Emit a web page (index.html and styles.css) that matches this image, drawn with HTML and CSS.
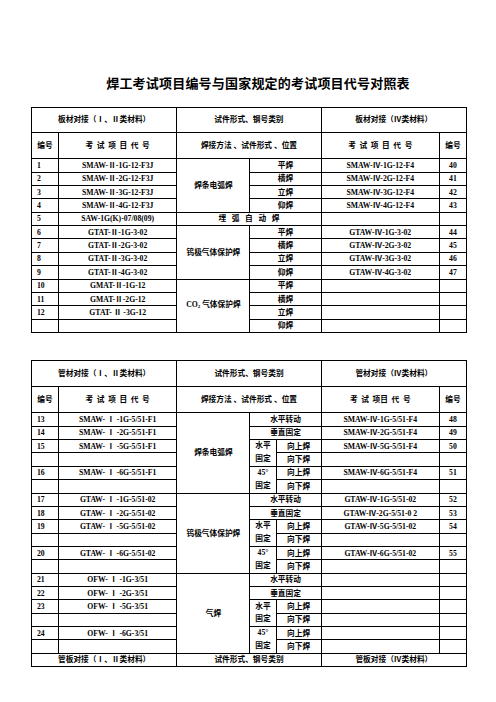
FILE: index.html
```html
<!DOCTYPE html>
<html lang="zh-CN">
<head>
<meta charset="utf-8">
<title>焊工考试项目编号与国家规定的考试项目代号对照表</title>
<link rel="stylesheet" href="styles.css">
</head>
<body>
<div class="page">
  <h1 class="title">焊工考试项目编号与国家规定的考试项目代号对照表</h1>

  <table class="sheet plate">
    <colgroup>
      <col class="c-no"><col class="c-code"><col class="c-method"><col class="c-pos"><col class="c-code"><col class="c-no">
    </colgroup>
    <tr class="h1">
      <td colspan="2">板材对接（Ⅰ、Ⅱ类材料）</td>
      <td colspan="2">试件形式、钢号类别</td>
      <td colspan="2">板材对接（Ⅳ类材料）</td>
    </tr>
    <tr class="h2">
      <td>编号</td>
      <td class="spaced">考 试 项 目 代 号</td>
      <td colspan="2">焊接方法 、试件形式 、位置</td>
      <td class="spaced">考 试 项 目 代 号</td>
      <td>编号</td>
    </tr>
    <tr><td class="num">1</td><td>SMAW-Ⅱ-1G-12-F3J</td><td rowspan="4">焊条电弧焊</td><td>平焊</td><td>SMAW-Ⅳ-1G-12-F4</td><td>40</td></tr>
    <tr><td class="num">2</td><td>SMAW-Ⅱ-2G-12-F3J</td><td>横焊</td><td>SMAW-Ⅳ-2G-12-F4</td><td>41</td></tr>
    <tr><td class="num">3</td><td>SMAW-Ⅱ-3G-12-F3J</td><td>立焊</td><td>SMAW-Ⅳ-3G-12-F4</td><td>42</td></tr>
    <tr><td class="num">4</td><td>SMAW-Ⅱ-4G-12-F3J</td><td>仰焊</td><td>SMAW-Ⅳ-4G-12-F4</td><td>43</td></tr>
    <tr><td class="num">5</td><td>SAW-1G(K)-07/08(09)</td><td colspan="2" class="wide">埋 弧 自 动 焊</td><td></td><td></td></tr>
    <tr><td class="num">6</td><td>GTAT-Ⅱ-1G-3-02</td><td rowspan="4">钨极气体保护焊</td><td>平焊</td><td>GTAW-Ⅳ-1G-3-02</td><td>44</td></tr>
    <tr><td class="num">7</td><td>GTAT-Ⅱ-2G-3-02</td><td>横焊</td><td>GTAW-Ⅳ-2G-3-02</td><td>45</td></tr>
    <tr><td class="num">8</td><td>GTAT-Ⅱ-3G-3-02</td><td>立焊</td><td>GTAW-Ⅳ-3G-3-02</td><td>46</td></tr>
    <tr><td class="num">9</td><td>GTAT-Ⅱ-4G-3-02</td><td>仰焊</td><td>GTAW-Ⅳ-4G-3-02</td><td>47</td></tr>
    <tr><td class="num">10</td><td>GMAT-Ⅱ-1G-12</td><td rowspan="4">CO<span class="sub">2</span> 气体保护焊</td><td>平焊</td><td></td><td></td></tr>
    <tr><td class="num">11</td><td>GMAT-Ⅱ-2G-12</td><td>横焊</td><td></td><td></td></tr>
    <tr><td class="num">12</td><td>GTAT- Ⅱ -3G-12</td><td>立焊</td><td></td><td></td></tr>
    <tr><td class="num"></td><td></td><td>仰焊</td><td></td><td></td></tr>
  </table>

  <table class="sheet pipe">
    <colgroup>
      <col class="c-no"><col class="c-code"><col class="c-method"><col class="c-pos1"><col class="c-pos2"><col class="c-code"><col class="c-no">
    </colgroup>
    <tr class="h1b">
      <td colspan="2">管材对接（Ⅰ、Ⅱ类材料）</td>
      <td colspan="3">试件形式、钢号类别</td>
      <td colspan="2">管材对接（Ⅳ类材料）</td>
    </tr>
    <tr class="h2">
      <td>编号</td>
      <td class="spaced">考 试 项 目 代 号</td>
      <td colspan="3">焊接方法 、试件形式 、位置</td>
      <td class="spaced">考 试 项目 代 号</td>
      <td>编号</td>
    </tr>

    <tr><td class="num">13</td><td>SMAW- Ⅰ -1G-5/51-F1</td><td rowspan="6">焊条电弧焊</td><td colspan="2">水平转动</td><td>SMAW-Ⅳ-1G-5/51-F4</td><td>48</td></tr>
    <tr><td class="num">14</td><td>SMAW- Ⅰ -2G-5/51-F1</td><td colspan="2">垂直固定</td><td>SMAW-Ⅳ-2G-5/51-F4</td><td>49</td></tr>
    <tr><td class="num">15</td><td>SMAW- Ⅰ -5G-5/51-F1</td><td rowspan="2" class="two">水平<br>固定</td><td>向上焊</td><td>SMAW-Ⅳ-5G-5/51-F4</td><td>50</td></tr>
    <tr><td class="num"></td><td></td><td>向下焊</td><td></td><td></td></tr>
    <tr><td class="num">16</td><td>SMAW- Ⅰ -6G-5/51-F1</td><td rowspan="2" class="two">45°<br>固定</td><td>向上焊</td><td>SMAW-Ⅳ-6G-5/51-F4</td><td>51</td></tr>
    <tr><td class="num"></td><td></td><td>向下焊</td><td></td><td></td></tr>

    <tr><td class="num">17</td><td>GTAW- Ⅰ -1G-5/51-02</td><td rowspan="6">钨极气体保护焊</td><td colspan="2">水平转动</td><td>GTAW-Ⅳ-1G-5/51-02</td><td>52</td></tr>
    <tr><td class="num">18</td><td>GTAW- Ⅰ -2G-5/51-02</td><td colspan="2">垂直固定</td><td>GTAW-Ⅳ-2G-5/51-0 2</td><td>53</td></tr>
    <tr><td class="num">19</td><td>GTAW- Ⅰ -5G-5/51-02</td><td rowspan="2" class="two">水平<br>固定</td><td>向上焊</td><td>GTAW-Ⅳ-5G-5/51-02</td><td>54</td></tr>
    <tr><td class="num"></td><td></td><td>向下焊</td><td></td><td></td></tr>
    <tr><td class="num">20</td><td>GTAW- Ⅰ -6G-5/51-02</td><td rowspan="2" class="two">45°<br>固定</td><td>向上焊</td><td>GTAW-Ⅳ-6G-5/51-02</td><td>55</td></tr>
    <tr><td class="num"></td><td></td><td>向下焊</td><td></td><td></td></tr>

    <tr><td class="num">21</td><td>OFW- Ⅰ -1G-3/51</td><td rowspan="6">气焊</td><td colspan="2">水平转动</td><td></td><td></td></tr>
    <tr><td class="num">22</td><td>OFW- Ⅰ -2G-3/51</td><td colspan="2">垂直固定</td><td></td><td></td></tr>
    <tr><td class="num">23</td><td>OFW- Ⅰ -5G-3/51</td><td rowspan="2" class="two">水平<br>固定</td><td>向上焊</td><td></td><td></td></tr>
    <tr><td class="num"></td><td></td><td>向下焊</td><td></td><td></td></tr>
    <tr><td class="num">24</td><td>OFW- Ⅰ -6G-3/51</td><td rowspan="2" class="two">45°<br>固定</td><td>向上焊</td><td></td><td></td></tr>
    <tr><td class="num"></td><td></td><td>向下焊</td><td></td><td></td></tr>

    <tr>
      <td colspan="2">管板对接（Ⅰ、Ⅱ类材料）</td>
      <td colspan="3">试件形式、钢号类别</td>
      <td colspan="2">管板对接（Ⅳ类材料）</td>
    </tr>
  </table>
</div>
</body>
</html>
```

FILE: styles.css
```css
html, body {
  margin: 0;
  padding: 0;
  background: #ffffff;
}

body {
  font-family: "Liberation Serif", "Noto Sans CJK SC", serif;
  font-weight: 700;
  color: #000000;
}

.page {
  padding-top: 75px;
}

.title {
  margin: 0 0 16px 0;
  padding-left: 20px;
  font-family: "Noto Sans CJK SC", sans-serif;
  font-size: 13px;
  line-height: 16px;
  font-weight: 700;
  letter-spacing: 0.2px;
  text-align: center;
}

.sheet {
  border-collapse: collapse;
  table-layout: fixed;
  width: 436px;
  margin-left: 31px;
  font-size: 7.7px;
}

.pipe {
  margin-top: 27px;
}

.c-no { width: 27px; }
.c-code { width: 118px; }
.c-method { width: 73px; }
.c-pos { width: 71px; }
.c-pos1 { width: 26px; }
.c-pos2 { width: 45px; }

.sheet td {
  border: 1px solid #000000;
  padding: 0;
  text-align: center;
  vertical-align: middle;
  line-height: 9px;
  white-space: nowrap;
  overflow: hidden;
}

.sheet tr {
  height: 13.36px;
}

.sheet tr.h1 {
  height: 24.7px;
}

.sheet tr.h1b {
  height: 25.8px;
}

.sheet tr.h2 {
  height: 26.6px;
}

.sheet td.num {
  text-align: left;
  padding-left: 5px;
}

.sheet td.two {
  line-height: 12.6px;
}

.spaced {
  word-spacing: 1.7px;
}

.wide {
  word-spacing: 3.7px;
}

.sub {
  font-size: 5px;
  vertical-align: -1px;
}
```
